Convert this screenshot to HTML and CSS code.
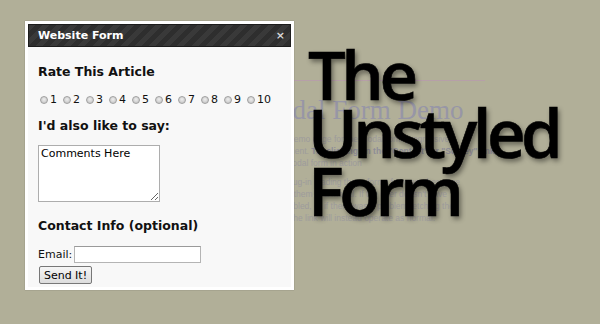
FILE: index.html
```html
<!DOCTYPE html>
<html lang="en">
<head>
<meta charset="utf-8">
<title>The Unstyled Form</title>
<link rel="stylesheet" href="styles.css">
</head>
<body>
<main class="page">
  <div class="page-rule"></div>
  <h1 class="page-title">Modal Form Demo</h1>
  <p class="page-text">
    <span class="line">This is a demo page for the modal form progressive</span>
    <span class="line">enhancement. <b>Try clicking on the "Contact" or "Survey" links</b></span>
    <span class="line">see the modal form in action</span>
  </p>
  <p class="page-text">
    <span class="line">Using a plug-in loading these forms from another page</span>
    <span class="line">and show them in a modal. If the user doesn't have</span>
    <span class="line">script disabled, or if there was a problem fetching the</span>
    <span class="line">the form, the link will instead operate as normal.</span>
  </p>
</main>

<section class="dialog">
  <div class="titlebar">
    <span class="title">Website Form</span>
    <span class="close">×</span>
  </div>
  <form class="content">
    <h2 class="heading h-rate">Rate This Article</h2>
    <div class="rate">
      <label class="opt"><input type="radio" name="r">1</label>
      <label class="opt"><input type="radio" name="r">2</label>
      <label class="opt"><input type="radio" name="r">3</label>
      <label class="opt"><input type="radio" name="r">4</label>
      <label class="opt"><input type="radio" name="r">5</label>
      <label class="opt"><input type="radio" name="r">6</label>
      <label class="opt"><input type="radio" name="r">7</label>
      <label class="opt"><input type="radio" name="r">8</label>
      <label class="opt"><input type="radio" name="r">9</label>
      <label class="opt"><input type="radio" name="r">10</label>
    </div>
    <h2 class="heading h-say">I'd also like to say:</h2>
    <textarea class="comments">Comments Here</textarea>
    <h2 class="heading h-contact">Contact Info (optional)</h2>
    <div class="email-row">
      <label class="email-label">Email:</label>
      <input class="email" type="text">
    </div>
    <button class="send" type="button">Send It!</button>
  </form>
</section>

<div class="headline">The<br>Unstyled<br>Form</div>
</body>
</html>
```

FILE: styles.css
```css
html, body {
  margin: 0;
  padding: 0;
}
body {
  width: 600px;
  height: 324px;
  overflow: hidden;
  background: #b1af98;
  font-family: "DejaVu Sans", Verdana, sans-serif;
  position: relative;
}

/* background page */
.page {
  margin-left: 255px;
  width: 230px;
  padding-top: 80px;
}
.page-rule {
  border-top: 1px solid #b69fa8;
}
.page-title {
  margin: 13px 0 0 0;
  font-family: "Liberation Serif", serif;
  font-weight: normal;
  font-size: 27px;
  line-height: 32px;
  color: #9796a6;
  white-space: nowrap;
}
.page-text {
  margin: 7px 0 0 0;
  font-family: "Liberation Sans", Arial, sans-serif;
  font-size: 8.5px;
  line-height: 12px;
  color: #9d9b9c;
}
.page-text .line {
  display: block;
  white-space: nowrap;
}
.page-text b {
  color: #8e8d97;
}

/* dialog */
.dialog {
  position: absolute;
  left: 25px;
  top: 21px;
  width: 269px;
  height: 269px;
  box-sizing: border-box;
  border: 3px solid #ffffff;
  box-shadow: 0 0 1px rgba(0, 0, 0, 0.35);
  display: flex;
  flex-direction: column;
  background: #f8f8f8;
}
.titlebar {
  height: 23px;
  box-sizing: border-box;
  border: 1px solid #1c1c1c;
  background: repeating-linear-gradient(-45deg, #2e2e2e 0 5px, #393939 5px 10px);
  display: flex;
  align-items: center;
  justify-content: space-between;
  padding: 0 5px 0 9px;
}
.title {
  color: #ffffff;
  font-weight: bold;
  font-size: 11px;
}
.close {
  color: #d8d8d8;
  font-weight: bold;
  font-size: 11px;
  line-height: 11px;
}
.content {
  flex: 1;
  margin: 0;
  padding: 0 10px;
  display: flex;
  flex-direction: column;
  align-items: flex-start;
  color: #111;
}
.heading {
  margin: 0;
  font-size: 12.5px;
  line-height: 15px;
  font-weight: bold;
  color: #111;
}
.h-rate { margin-top: 17px; }
.h-say { margin-top: 12px; }
.h-contact { margin-top: 16px; }

.rate {
  margin-top: 14px;
  display: flex;
  gap: 4px;
  font-size: 11px;
  line-height: 13px;
}
.opt {
  display: flex;
  align-items: center;
}
.opt input {
  -webkit-appearance: none;
  appearance: none;
  width: 8px;
  height: 8px;
  margin: 0 2px;
  border-radius: 50%;
  border: 1px solid #a0a0a0;
  background: radial-gradient(circle at 50% 40%, #eeeeee 0, #cccccc 70%);
  box-sizing: border-box;
}

.comments {
  margin-top: 12px;
  width: 122px;
  height: 57px;
  box-sizing: border-box;
  border: 1px solid #adadad;
  padding: 1px 2px;
  font-family: "DejaVu Sans", Verdana, sans-serif;
  font-size: 11px;
  line-height: 13px;
  background: #fff;
  color: #000;
}

.email-row {
  margin-top: 13px;
  display: flex;
  align-items: center;
  gap: 2px;
  font-size: 11px;
}
.email {
  width: 127px;
  height: 17px;
  box-sizing: border-box;
  border: 1px solid #b4b4b4;
  border-top-color: #9a9a9a;
  padding: 0 2px;
  background: #fff;
}
.send {
  margin-top: 3px;
  margin-left: 1px;
  height: 18px;
  width: 53px;
  padding: 0;
  box-sizing: border-box;
  border: 1px solid #777;
  border-radius: 2px;
  background: linear-gradient(#f6f6f6, #dcdcdc);
  font-family: "DejaVu Sans", Verdana, sans-serif;
  font-size: 11px;
  color: #000;
}

/* big overlay headline */
.headline {
  position: absolute;
  left: 308px;
  top: 45px;
  font-family: "Open Sans", sans-serif;
  font-weight: 600;
  font-size: 67px;
  line-height: 58px;
  letter-spacing: -4.5px;
  color: #000;
  -webkit-text-stroke: 0.6px #000;
  text-shadow: 2px 3px 5px rgba(0, 0, 0, 0.45);
}
```
